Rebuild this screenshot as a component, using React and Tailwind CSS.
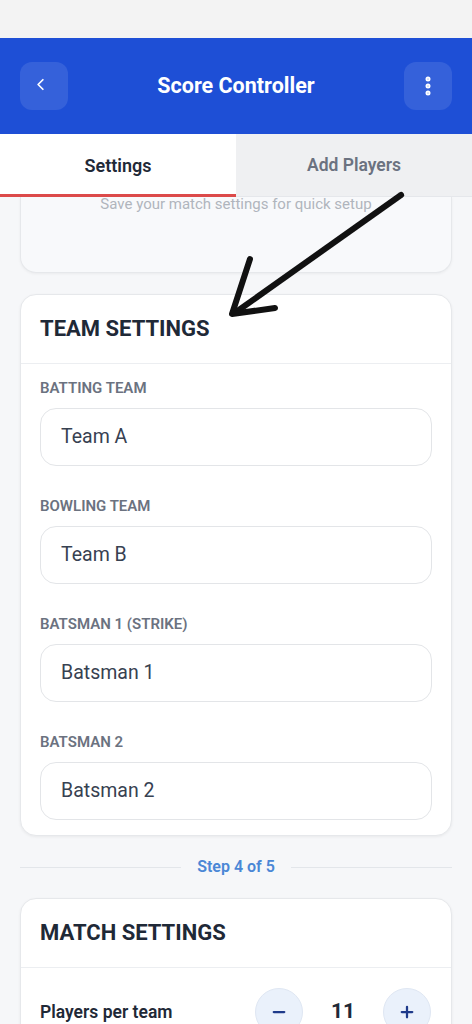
import { ChevronLeft, EllipsisVertical, Minus, Plus } from 'lucide-react'

const teamFields = [
  { label: 'Batting Team', value: 'Team A' },
  { label: 'Bowling Team', value: 'Team B' },
  { label: 'Batsman 1 (Strike)', value: 'Batsman 1' },
  { label: 'Batsman 2', value: 'Batsman 2' },
]

function SectionCard({ title, children }) {
  return (
    <div className="bg-white rounded-2xl border border-[#e6e8eb] shadow-[0_1px_3px_rgba(0,0,0,0.06)]">
      <div className="px-[19px] py-5 border-b border-[#eceef1]">
        <h2 className="text-[22px] leading-7 font-bold text-[#1f2937] uppercase">{title}</h2>
      </div>
      {children}
    </div>
  )
}

export default function App() {
  return (
    <div
      className="relative w-[472px] h-[1024px] overflow-hidden bg-[#f6f7f9]"
      style={{ fontFamily: 'Roboto, "Noto Sans", sans-serif' }}
    >
      {/* status bar area */}
      <div className="h-[38px] bg-[#f3f3f3]" />

      {/* header */}
      <div className="h-[96px] bg-[#1e4fd6] px-5 flex items-center justify-between">
        <button className="w-12 h-12 rounded-xl bg-white/10 flex items-center justify-center text-white">
          <ChevronLeft size={19} strokeWidth={2.2} className="-ml-2 -mt-1" />
        </button>
        <h1 className="text-[21.5px] font-bold text-white">Score Controller</h1>
        <button className="w-12 h-12 rounded-xl bg-white/10 flex items-center justify-center text-white">
          <EllipsisVertical size={24} strokeWidth={3} />
        </button>
      </div>

      {/* tabs */}
      <div className="flex h-[63px]">
        <div className="flex-1 bg-white flex items-center justify-center border-b-[3px] border-[#dc4a4a]">
          <span className="text-[18px] font-semibold text-[#1f2937] mt-[3px]">Settings</span>
        </div>
        <div className="flex-1 bg-[#eff0f2] flex items-center justify-center border-b border-[#e5e7eb]">
          <span className="text-[17.5px] font-semibold text-[#6b7280]">Add Players</span>
        </div>
      </div>

      {/* content */}
      <div className="px-5">
        <div className="h-[76px] bg-[#f8f9fb] rounded-b-2xl border border-t-0 border-[#e6e8eb] shadow-[0_1px_3px_rgba(0,0,0,0.05)] flex justify-center">
          <p className="text-[15px] leading-4 -mt-[1px] text-[#b0b5bd]">Save your match settings for quick setup</p>
        </div>

        <div className="mt-[21px]">
          <SectionCard title="Team Settings">
            <div className="px-[19px] pt-[14px] pb-[15px] flex flex-col gap-[30px]">
              {teamFields.map(f => (
                <div key={f.label}>
                  <label className="block text-[15px] leading-5 font-semibold text-[#6b7280] uppercase mb-[10px]">
                    {f.label}
                  </label>
                  <div className="h-[58px] rounded-2xl border border-[#e3e5e8] flex items-center px-5">
                    <span className="text-[19.5px] text-[#374151]">{f.value}</span>
                  </div>
                </div>
              ))}
            </div>
          </SectionCard>
        </div>

        <div className="mt-[21px] flex items-center gap-4">
          <div className="flex-1 h-px bg-[#e3e6ea]" />
          <span className="text-[16px] leading-5 font-semibold text-[#4a87d6]">Step 4 of 5</span>
          <div className="flex-1 h-px bg-[#e3e6ea]" />
        </div>

        <div className="mt-[21px]">
          <SectionCard title="Match Settings">
            <div className="pl-[19px] pr-5 pt-5 pb-5 flex items-center justify-between">
              <span className="text-[17.5px] font-semibold text-[#1f2937]">Players per team</span>
              <div className="flex items-center">
                <button className="w-12 h-12 rounded-full bg-[#eaf1fb] border border-[#dfe7f3] flex items-center justify-center text-[#1e3a8a]">
                  <Minus size={18} strokeWidth={3} />
                </button>
                <span className="w-20 text-center text-[21px] font-bold text-[#1f2937]">11</span>
                <button className="w-12 h-12 rounded-full bg-[#eaf1fb] border border-[#dfe7f3] flex items-center justify-center text-[#1e3a8a]">
                  <Plus size={18} strokeWidth={3} />
                </button>
              </div>
            </div>
          </SectionCard>
        </div>
      </div>

      {/* hand-drawn annotation arrow */}
      <svg className="absolute left-0 top-0 pointer-events-none" width="472" height="1024" viewBox="0 0 472 1024">
        <g stroke="#111" strokeWidth="6" strokeLinecap="round" strokeLinejoin="round" fill="none">
          <path d="M401 195 L236 312" />
          <path d="M250 259 L232 314 L275 308" />
        </g>
      </svg>
    </div>
  )
}
